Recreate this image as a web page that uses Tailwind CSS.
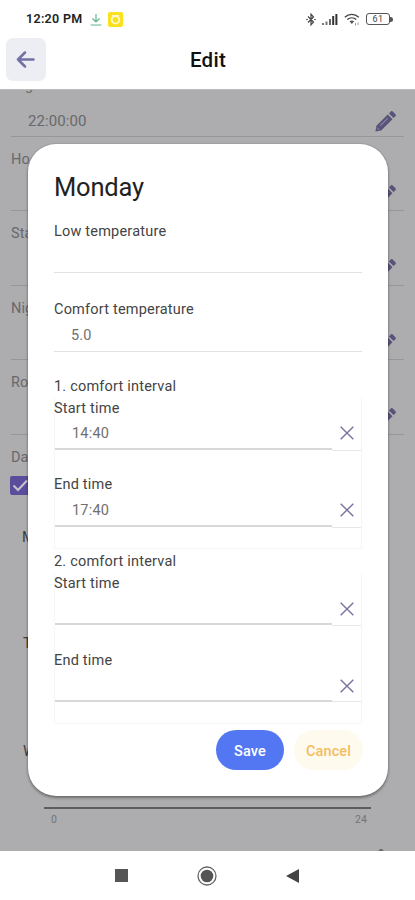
<!DOCTYPE html>
<html lang="en">
<head>
<meta charset="utf-8">
<meta name="viewport" content="width=device-width, initial-scale=1">
<title>Edit</title>
<script src="https://cdn.jsdelivr.net/npm/@tailwindcss/browser@4"></script>
</head>
<body class="w-[415px] h-[900px] overflow-hidden bg-white font-['Roboto',sans-serif] text-[14.500px] text-[#4a4a4a]">
<svg class="hidden">
  <symbol id="pencil" viewBox="0 0 24 24"><path fill="#57537a" d="M1.500 22.500 2.500 16.500 14.300 4.700l5 5L7.500 21.500zM15.600 3.600l2-2c.6-.6 1.300-.6 1.900 0l2.900 2.900c.6.600.6 1.300 0 1.900l-2 2z"/><path d="M6.500 16.500 14.500 8.500" stroke="#85839b" stroke-width="1.300"/><path d="m3.200 18.500 2.300 2.300" stroke="#9795a5" stroke-width="1"/></symbol>
  <symbol id="cross" viewBox="0 0 14 14"><path d="M.7.7l12.600 12.600M13.300.7.7 13.300" stroke="#7672a0" stroke-width="1.400" fill="none"/></symbol>
</svg>
<div class="flex flex-col h-full">
  <header class="h-[89px] shrink-0 flex flex-col">
    <div class="h-[38px] flex items-center pl-[26px] pr-[22px]">
      <span class="text-[12.500px] font-semibold text-[#222] tracking-[0.3px]">12:20 PM</span>
      <svg class="ml-[8px] w-[12px] h-[13px]" viewBox="0 0 12 13" fill="none" stroke="#62b58f" stroke-width="1.200"><path d="M6 1v8M2.500 5.500 6 9l3.500-3.500M.5 12h11"/></svg>
      <svg class="ml-[6px] w-[15px] h-[15px]" viewBox="0 0 15 15"><rect width="15" height="15" rx="2" fill="#fbe01c"/><circle cx="7.500" cy="7.800" r="3.800" fill="none" stroke="#fffbd2" stroke-width="1.800"/><path d="M4 3.500h1.500M9.500 3.500H11" stroke="#fffbd2"/></svg>
      <svg class="ml-auto w-[10px] h-[13px]" viewBox="0 0 10 13" fill="none" stroke="#444" stroke-width="1.200"><path d="M2 3.500 7.500 9 5 11.800V1.200L7.500 4 2 9.500M.2 6.500h1.600M8.200 6.500h1.600"/></svg>
      <svg class="ml-[6px] w-[16px] h-[12px]" viewBox="0 0 16 12"><path d="M0 10h2v2H0zM3.500 8.500h2V12h-2z" fill="#777"/><path d="M7 6h2v6H7z" fill="#666"/><path d="M10.200 3h2v9h-2zM13.400 1h2v11h-2z" fill="#333"/></svg>
      <svg class="ml-[6px] w-[16px] h-[13px]" viewBox="0 0 16 13" fill="none" stroke="#444" stroke-width="1.300"><path d="M.8 4.200c4-3.700 10-3.700 14 0M3.300 6.600c2.600-2.400 6.400-2.400 9 0"/><path d="M5.500 8.300 7.800 11l2.400-2.700c-1.400-1.100-3.200-1.100-4.700 0z" fill="#555" stroke="none"/><path d="M11.500 10v2.500M14 9.500V12" stroke="#999" stroke-width="1"/></svg>
      <div class="ml-[6px] w-[24px] h-[12px] rounded-[3px] border-[1.500px] border-[#555] flex items-center justify-center text-[9px] leading-none text-[#444] tracking-[0.5px]">61</div>
      <span class="w-[3px] h-[5px] rounded-r-full bg-[#555]"></span>
    </div>
    <div class="h-[51px] grid grid-cols-[40px_1fr_40px] px-[6px]">
      <div class="w-[40px] h-[43px] rounded-[7px] bg-[#ededf4] flex items-center justify-center">
        <svg class="w-[20px] h-[18px]" viewBox="0 0 20 18" fill="none" stroke="#7370a5" stroke-width="2.500" stroke-linecap="round" stroke-linejoin="round"><path d="M17.500 8.500H2M9 1.500 2 8.500l7 7"/></svg>
      </div>
      <h1 class="h-[45px] pl-px flex items-center justify-center text-[20.500px] font-medium text-[#111] tracking-[0.300px]">Edit</h1>
    </div>
  </header>

  <main class="relative h-[762px] shrink-0 overflow-hidden bg-[#adadaf] text-[#68686b] tracking-[0.1px] border-t border-[#bcbcbe]">
    <div class="-mt-[28px] px-[11px]">
      <div class="h-[74.500px] border-b border-[#979799] pt-[14px]">
        <div class="leading-[20px]">Night start time</div>
        <div class="flex items-center justify-between h-[22px] mt-[14px] pl-[17px] pr-[7px]"><span class="text-[15px]">22:00:00</span><svg class="w-[23px] h-[23px]"><use href="#pencil"/></svg></div>
      </div>
      <div class="h-[74.500px] border-b border-[#979799] pt-[13px]">
        <div class="leading-[20px]">Ho</div>
        <div class="flex justify-end mt-[14px] pr-[7px]"><svg class="w-[23px] h-[23px]"><use href="#pencil"/></svg></div>
      </div>
      <div class="h-[74.500px] border-b border-[#979799] pt-[13px]">
        <div class="leading-[20px]">Sta</div>
        <div class="flex justify-end mt-[14px] pr-[7px]"><svg class="w-[23px] h-[23px]"><use href="#pencil"/></svg></div>
      </div>
      <div class="h-[74.500px] border-b border-[#979799] pt-[13px]">
        <div class="leading-[20px]">Nig</div>
        <div class="flex justify-end mt-[14px] pr-[7px]"><svg class="w-[23px] h-[23px]"><use href="#pencil"/></svg></div>
      </div>
      <div class="h-[74.500px] border-b border-[#979799] pt-[13px]">
        <div class="leading-[20px]">Ro</div>
        <div class="flex justify-end mt-[14px] pr-[7px]"><svg class="w-[23px] h-[23px]"><use href="#pencil"/></svg></div>
      </div>
      <div class="pt-[12px] h-[32px] leading-[22px]">Da</div>
      <div class="mt-[9px] -ml-px w-[19px] h-[19px] rounded-[2px] bg-[#5b4d9c] flex items-center justify-center"><svg class="w-[16px] h-[13px]" viewBox="0 0 16 13"><path d="m1.500 6.500 4.500 4.500 9-9.500" fill="none" stroke="#c5c4ce" stroke-width="2"/></svg></div>
      <div class="mt-[32px] pl-[11px] h-[106.500px] leading-[22px] text-[#3c3c3e]">M</div>
      <div class="pl-[12px] h-[108px] leading-[22px] text-[#3c3c3e]">T</div>
      <div class="pl-[12px] h-[66px] leading-[22px] text-[#3c3c3e]">W</div>
      <div class="ml-[33px] w-[327px] border-t-2 border-[#5c5c5e] flex justify-between pl-[7px] pr-[4px] pt-[4px] text-[10.500px] leading-[14px] text-[#737375]"><span>0</span><span>24</span></div>
      <svg class="mt-[20px] ml-[367px] w-[6px] h-[5px]" viewBox="0 0 6 5"><path d="M0 5c.5-2 1.500-3 3-3s2.500 1 3 3z" fill="#6c6c70"/></svg>
    </div>

    <section class="absolute left-[28px] top-[54px] w-[360px] h-[652px] rounded-[28px] bg-white shadow-[0_2px_3px_rgba(0,0,0,0.35),0_0_2px_rgba(0,0,0,0.25)] px-[26px] text-[#444] tracking-[0.2px]">
      <h2 class="mt-[26px] h-[35px] leading-[34px] text-[25.500px] text-[#222] tracking-[-0.2px]">Monday</h2>
      <div class="mt-[16px] h-[52px] border-b border-[#e2e2e2] leading-[22px]">Low temperature</div>
      <div class="mt-[26px] h-[53px] border-b-[1.500px] border-[#e2e2e2]">
        <div class="h-[20px] leading-[22px]">Comfort temperature</div>
        <div class="mt-[6px] pl-[17px] leading-[22px] text-[#707070]">5.0</div>
      </div>

      <div class="mt-[24px] h-[20px] leading-[22px]">1. comfort interval</div>
      <div class="mt-[2px] h-[151px] border-x border-b border-[#f6f6f6]">
        <div class="h-[20px] leading-[22px] -ml-px">Start time</div>
        <div class="flex h-[32px]">
          <div class="w-[277px] h-[32px] border-b-2 border-[#d8d8d8] pt-[5px] pl-[17px] leading-[22px] text-[#707070]">14:40</div>
          <div class="grow h-[33px] border-b border-[#e6e6e6] flex justify-center pt-[8px]"><svg class="w-[14px] h-[14px]"><use href="#cross"/></svg></div>
        </div>
        <div class="mt-[24px] h-[20px] leading-[22px] -ml-px">End time</div>
        <div class="flex h-[33px]">
          <div class="w-[277px] h-[33px] border-b-2 border-[#d8d8d8] pt-[6px] pl-[17px] leading-[22px] text-[#707070]">17:40</div>
          <div class="grow h-[34px] border-b border-[#e6e6e6] flex justify-center pt-[9px]"><svg class="w-[14px] h-[14px]"><use href="#cross"/></svg></div>
        </div>
      </div>

      <div class="mt-[2px] h-[20px] leading-[22px]">2. comfort interval</div>
      <div class="mt-[2px] h-[151px] border-x border-b border-[#f6f6f6]">
        <div class="h-[20px] leading-[22px] -ml-px">Start time</div>
        <div class="flex h-[32px]">
          <div class="w-[277px] h-[32px] border-b-2 border-[#d8d8d8]"></div>
          <div class="grow h-[33px] border-b border-[#e6e6e6] flex justify-center pt-[9px]"><svg class="w-[14px] h-[14px]"><use href="#cross"/></svg></div>
        </div>
        <div class="mt-[25px] h-[20px] leading-[22px] -ml-px">End time</div>
        <div class="flex h-[32px]">
          <div class="w-[277px] h-[32px] border-b-2 border-[#d8d8d8]"></div>
          <div class="grow h-[32px] border-b border-[#e6e6e6] flex justify-center pt-[9px]"><svg class="w-[14px] h-[14px]"><use href="#cross"/></svg></div>
        </div>
      </div>

      <div class="mt-[6px] flex justify-end gap-[10px] -mr-px font-medium tracking-[0.1px]">
        <button class="w-[68px] h-[40px] pt-[3px] rounded-full bg-[#5377f3] text-white">Save</button>
        <button class="w-[69px] h-[40px] pt-[3px] rounded-full bg-[#fffaee] text-[#f3bd62]">Cancel</button>
      </div>
    </section>
  </main>

  <nav class="grow bg-white flex items-center pl-[115px]">
    <span class="w-[13px] h-[13px] bg-[#555]"></span>
    <svg class="ml-[69px] w-[20px] h-[20px]" viewBox="0 0 20 20"><circle cx="10" cy="10" r="9" fill="none" stroke="#666" stroke-width="1.300"/><circle cx="10" cy="10" r="6.300" fill="#555"/></svg>
    <svg class="ml-[69px] w-[13px] h-[14px]" viewBox="0 0 13 14"><path d="M0 7 13 0v14z" fill="#444"/></svg>
  </nav>
</div>
</body>
</html>
